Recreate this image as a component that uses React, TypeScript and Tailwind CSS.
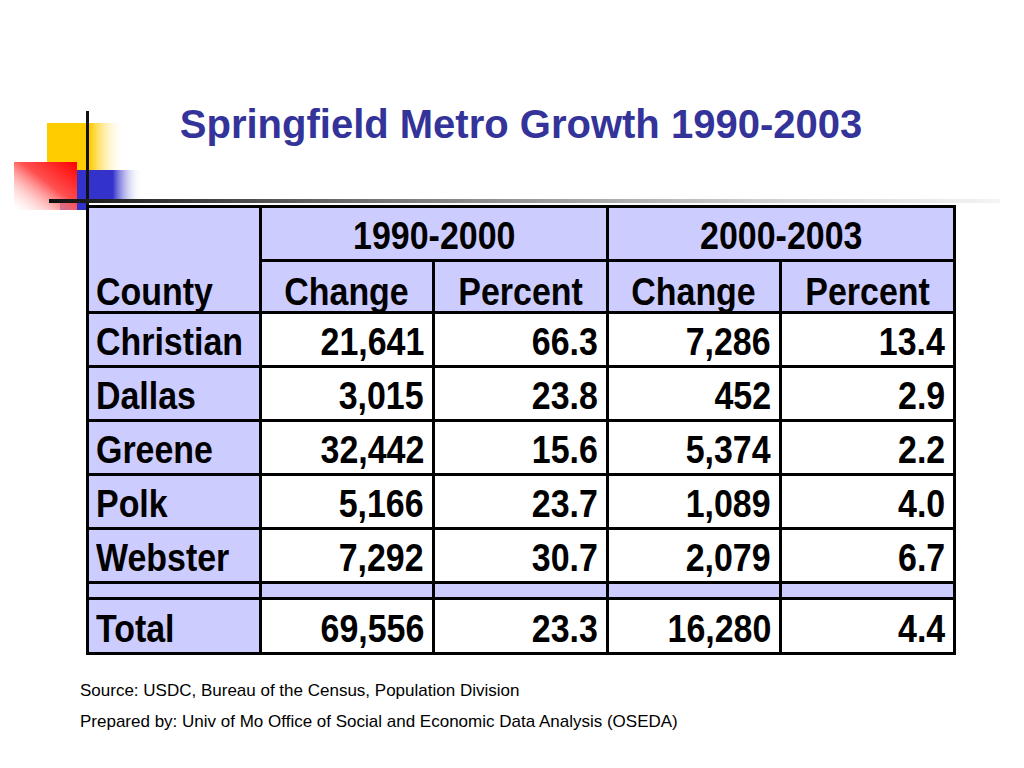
import React from 'react';

// Table data
const rows = [
  { county: "Christian", c1: "21,641", p1: "66.3", c2: "7,286", p2: "13.4" },
  { county: "Dallas", c1: "3,015", p1: "23.8", c2: "452", p2: "2.9" },
  { county: "Greene", c1: "32,442", p1: "15.6", c2: "5,374", p2: "2.2" },
  { county: "Polk", c1: "5,166", p1: "23.7", c2: "1,089", p2: "4.0" },
  { county: "Webster", c1: "7,292", p1: "30.7", c2: "2,079", p2: "6.7" },
];

const total = { county: "Total", c1: "69,556", p1: "23.3", c2: "16,280", p2: "4.4" };

function Logo() {
  return (
    <svg
      className="absolute left-0 top-[100px] pointer-events-none"
      width="1024"
      height="110"
      viewBox="0 100 1024 110"
    >
      <defs>
        <linearGradient id="yel" x1="0" y1="0" x2="1" y2="0">
          <stop offset="0" stopColor="#ffcc00" />
          <stop offset="0.55" stopColor="#ffcc00" />
          <stop offset="1" stopColor="#ffffff" stopOpacity="0" />
        </linearGradient>
        <linearGradient id="red" x1="1" y1="0" x2="0" y2="1">
          <stop offset="0" stopColor="#ff0000" />
          <stop offset="0.45" stopColor="#ff5050" />
          <stop offset="1" stopColor="#ffffff" stopOpacity="0.2" />
        </linearGradient>
        <linearGradient id="blu" x1="0" y1="0" x2="1" y2="0">
          <stop offset="0" stopColor="#3333cc" />
          <stop offset="0.55" stopColor="#3333cc" />
          <stop offset="1" stopColor="#ffffff" stopOpacity="0" />
        </linearGradient>
        <linearGradient id="bar" x1="0" y1="0" x2="1" y2="0">
          <stop offset="0" stopColor="#111111" />
          <stop offset="0.35" stopColor="#777777" />
          <stop offset="0.75" stopColor="#cfcfcf" />
          <stop offset="1" stopColor="#f4f4f4" />
        </linearGradient>
      </defs>
      <rect x="47" y="123" width="78" height="47" fill="url(#yel)" />
      <rect x="60" y="200" width="27" height="23" fill="#3333cc" />
      <rect x="14" y="162" width="63" height="48" fill="url(#red)" />
      <rect x="77" y="170" width="65" height="30" fill="url(#blu)" />
      <rect x="86" y="111" width="3" height="99" fill="#111111" />
      <rect x="49" y="199" width="951" height="4" fill="url(#bar)" />
    </svg>
  );
}

const cellFont = "font-['Liberation_Sans',Arial,sans-serif] font-bold text-[39px] leading-none text-black";

// condensed text, like Arial Narrow in the slide
function N({ children, origin }: { children: React.ReactNode; origin: string }) {
  return <span className={`inline-block whitespace-nowrap scale-x-[0.87] ${origin}`}>{children}</span>;
}

export default function App() {
  return (
    <div className="relative w-[1024px] h-[768px] bg-white overflow-hidden">
      <Logo />

      <div className="flex flex-col pt-[104px]">
        {/* Title */}
        <div className="ml-[86px] w-[870px] h-[40px] text-center font-['Liberation_Sans',Arial,sans-serif] font-bold text-[40px] leading-none text-[#333399] whitespace-nowrap">
          Springfield Metro Growth 1990-2003
        </div>

        {/* Table */}
        <div
          className={`relative mt-[61px] ml-[86px] w-fit grid grid-cols-[170px_170px_171px_170px_171px] grid-rows-[51px_49px_51px_51px_51px_51px_51px_13px_52px] gap-[3px] p-[3px] bg-black ${cellFont}`}
        >
          <div className="row-span-2 bg-[#ccccff] flex items-end pl-[7px]">
            <N origin="origin-left">County</N>
          </div>
          <div className="col-span-2 bg-[#ccccff] flex items-center justify-center pt-1">
            <N origin="origin-center">1990-2000</N>
          </div>
          <div className="col-span-2 bg-[#ccccff] flex items-center justify-center pt-1">
            <N origin="origin-center">2000-2003</N>
          </div>
          <div className="bg-[#ccccff] flex items-end justify-center"><N origin="origin-center">Change</N></div>
          <div className="bg-[#ccccff] flex items-end justify-center"><N origin="origin-center">Percent</N></div>
          <div className="bg-[#ccccff] flex items-end justify-center"><N origin="origin-center">Change</N></div>
          <div className="bg-[#ccccff] flex items-end justify-center"><N origin="origin-center">Percent</N></div>

          {[...rows, null, total].map((r, i) =>
            r === null ? (
              <React.Fragment key="spacer">
                <div className="bg-[#ccccff]" />
                <div className="bg-[#ccccff]" />
                <div className="bg-[#ccccff]" />
                <div className="bg-[#ccccff]" />
                <div className="bg-[#ccccff]" />
              </React.Fragment>
            ) : (
              <React.Fragment key={i}>
                <div className="bg-[#ccccff] flex items-center pl-[7px] pt-1">
                  <N origin="origin-left">{r.county}</N>
                </div>
                <div className="bg-white flex items-center justify-end pr-2 pt-1"><N origin="origin-right">{r.c1}</N></div>
                <div className="bg-white flex items-center justify-end pr-2 pt-1"><N origin="origin-right">{r.p1}</N></div>
                <div className="bg-white flex items-center justify-end pr-2 pt-1"><N origin="origin-right">{r.c2}</N></div>
                <div className="bg-white flex items-center justify-end pr-2 pt-1"><N origin="origin-right">{r.p2}</N></div>
              </React.Fragment>
            )
          )}
        </div>

        {/* Footer notes */}
        <div className="mt-[26px] ml-[80px] flex flex-col gap-[11px] font-['Liberation_Sans',Arial,sans-serif] text-[17px] leading-[20px] text-black">
          <p>Source: USDC, Bureau of the Census, Population Division</p>
          <p>Prepared by: Univ of Mo Office of Social and Economic Data Analysis (OSEDA)</p>
        </div>
      </div>
    </div>
  );
}
